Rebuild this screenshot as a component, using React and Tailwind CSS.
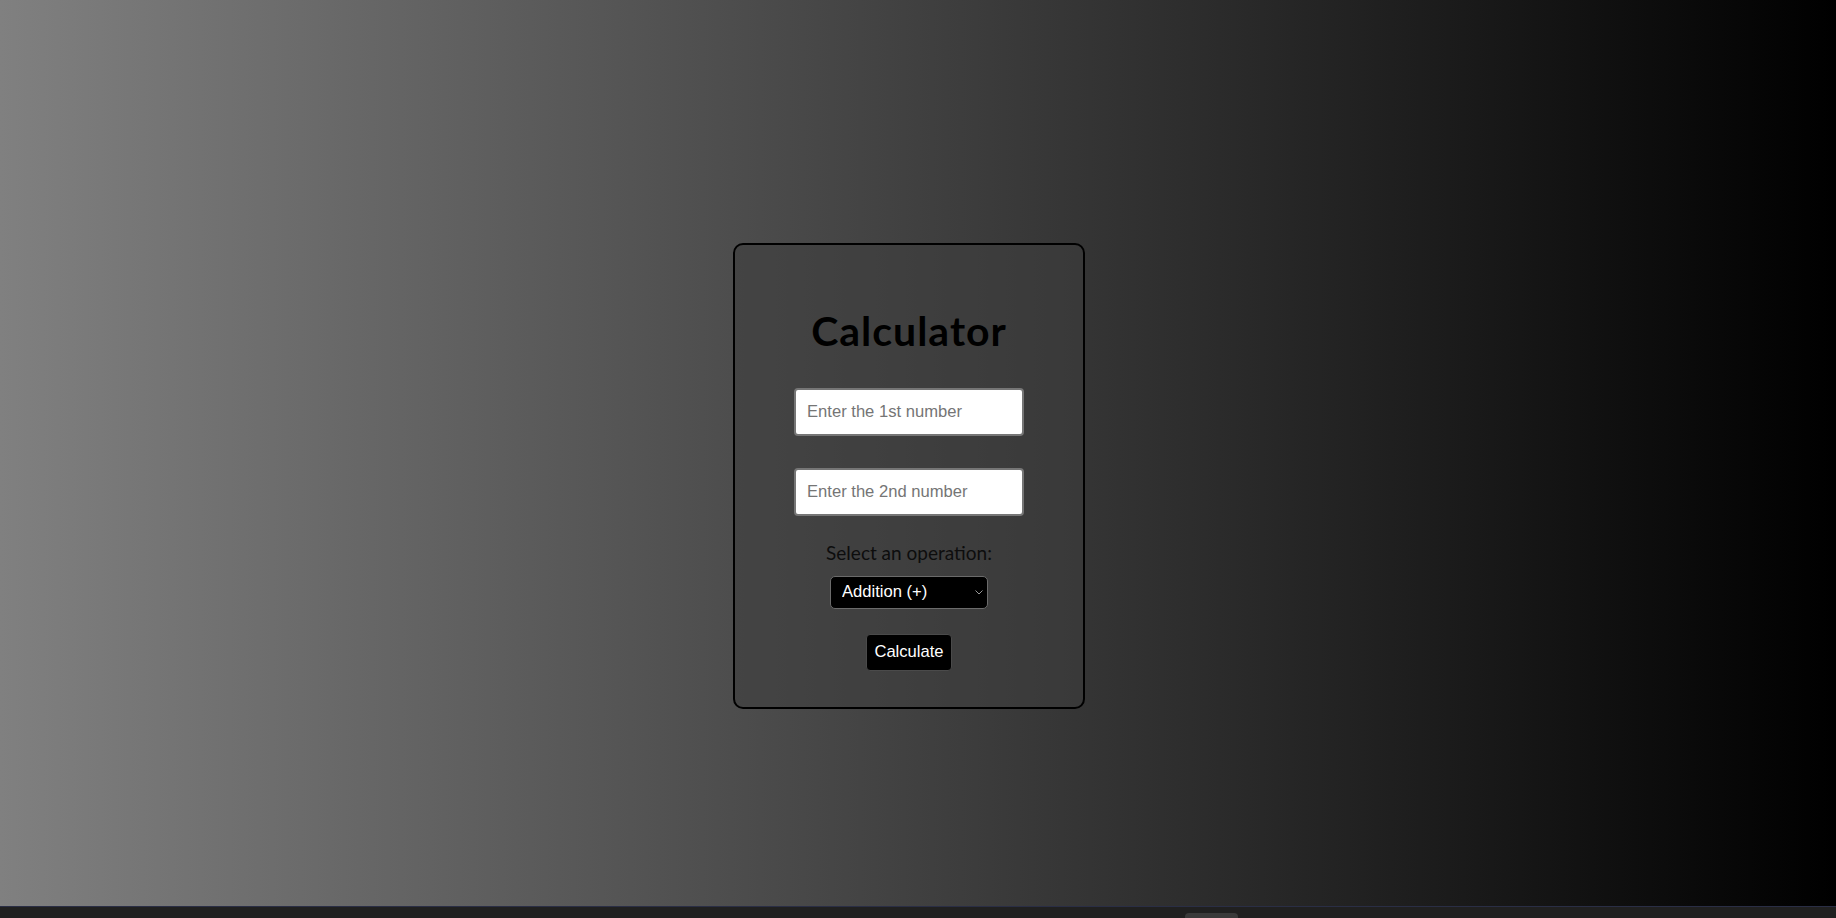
import React from "react";

export default function App() {
  return (
    <div className="w-full h-[918px] flex flex-col overflow-hidden">
      <div className="h-[906px] w-full bg-[linear-gradient(to_right,#808080,#000000)] flex justify-center items-start pt-[243px] pr-[18px]">
        <div className="w-[352px] border-2 border-black rounded-[10px] bg-[rgba(62,62,62,0.57)] flex flex-col items-center pt-[62px] pb-[36px]">
          <h1 className="text-[41px] leading-[48px] font-bold tracking-[1px] text-black" style={{ fontFamily: "Lato, 'Open Sans', sans-serif" }}>
            Calculator
          </h1>
          <input
            type="text"
            placeholder="Enter the 1st number"
            className="mt-[33px] w-[230px] h-[48px] bg-white border-2 border-[#767676] rounded-[4px] px-[11px] text-[16.6px] text-black placeholder:text-[#757575] outline-none"
            style={{ fontFamily: "'Liberation Sans', Arial, sans-serif" }}
          />
          <input
            type="text"
            placeholder="Enter the 2nd number"
            className="mt-[32px] w-[230px] h-[48px] bg-white border-2 border-[#767676] rounded-[4px] px-[11px] text-[16.6px] text-black placeholder:text-[#757575] outline-none"
            style={{ fontFamily: "'Liberation Sans', Arial, sans-serif" }}
          />
          <label className="mt-[25px] text-[19px] leading-[23px] text-[#0d0d0d]" style={{ fontFamily: "Lato, 'Open Sans', sans-serif" }}>
            Select an operation:
          </label>
          <div className="relative mt-[12px] w-[158px] h-[33px]">
            <select
              className="appearance-none w-full h-full bg-black text-white border border-[#6b6b6b] rounded-[5px] pl-[11px] pr-[24px] text-[16.6px] outline-none"
              style={{ fontFamily: "'Liberation Sans', Arial, sans-serif" }}
              defaultValue="add"
            >
              <option value="add">Addition (+)</option>
              <option value="sub">Subtraction (-)</option>
              <option value="mul">Multiplication (*)</option>
              <option value="div">Division (/)</option>
            </select>
            <svg className="absolute right-[5px] top-[14px] pointer-events-none" width="8" height="5" viewBox="0 0 8 5" fill="none">
              <path d="M0.5 0.5 L4 4 L7.5 0.5" stroke="#9a9a9a" strokeWidth="1" />
            </svg>
          </div>
          <button
            className="mt-[25px] h-[37px] px-[7px] bg-black text-white border border-[#4a4a4a] rounded-[4px] text-[16.6px]"
            style={{ fontFamily: "'Liberation Sans', Arial, sans-serif" }}
          >
            Calculate
          </button>
        </div>
      </div>
      <div className="h-[1px] w-full bg-[#2a2e45]"></div>
      <div className="relative h-[11px] w-full bg-[#202020]">
        <div className="absolute left-[1185px] top-[6px] w-[53px] h-[5px] bg-[#3a3a3a] rounded-t-[4px]"></div>
      </div>
    </div>
  );
}
